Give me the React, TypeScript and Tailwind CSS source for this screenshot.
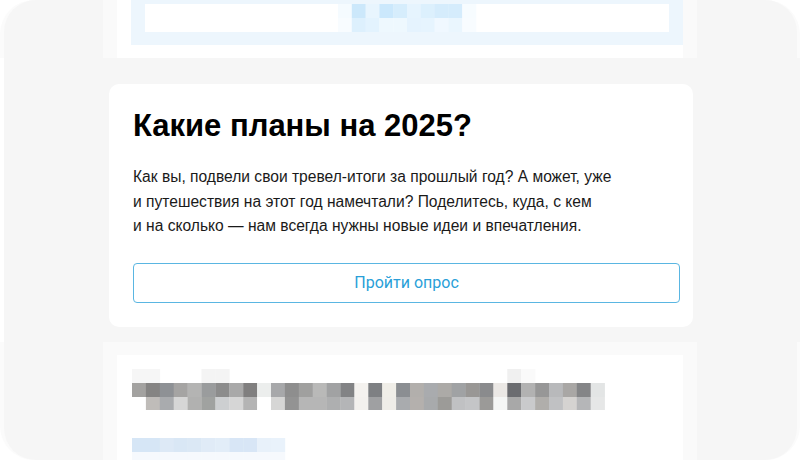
import React from "react";

const topRow1 = ["#f5fbff", "#cce8fb", "#e8f5fe", "#cbe8fc", "#d6edfc", "#e6f4fe", "#dcf0fd", "#d5ecfc", "#d5ecfc", "#f7fcff"];
const topRow2 = ["#f8fcff", "#ddf0fd", "#e3f3fe", "#eef8fe", "#eef8fe", "#e5f3fe", "#e6f4fe", "#f0f8ff", "#eaf6fe", "#f8fcff"];

const r1 = [
  "#a3a2a0", "#858483", "#8e9195", "#a5a4a3", "#b4b4b3", "#9a9c9d", "#8c8c8c", "#a9a9a9", "#807f7f", "#eceeed",
  "#a7a8aa", "#8e8e8e", "#a0a09f", "#b9b9b8", "#a1a2a3", "#828385", "#f4f2ef", "#7e8083", "#f0eee8", "#8b8e92",
  "#b2afac", "#a9abae", "#acaaa7", "#a0a2a4", "#999795", "#8a8b8d", "#ebe8e5", "#6b6c70", "#b2b2b2", "#979797",
  "#b8b9bb", "#a9a7a5", "#848587", "#e3e5e5",
];
const r2 = [
  "#ffffff", "#bfbcb9", "#a9abae", "#d6d6d6", "#b1b1b0", "#a0a2a0", "#cdcfd1", "#d6d6d6", "#b4b4b4", "#ffffff",
  "#d6d6d5", "#939393", "#b6b6b6", "#b6b6b6", "#aeafb0", "#b4b5b7", "#f3f1ee", "#9fa0a2", "#efede8", "#a9abae",
  "#b4b0ad", "#a8aaac", "#9c9b98", "#c0c1c3", "#c4c5c7", "#9b9a98", "#f5f6f5", "#a8a8a8", "#c9cacc", "#b0aeab",
  "#c0c1c3", "#d5d3d1", "#b5b6b8", "#e6e7e7",
];
const faintTop: Record<number, string> = { 0: "#f6f6f6", 1: "#f6f6f6", 5: "#f4f4f4", 6: "#f4f4f4", 27: "#f0f0f0", 28: "#fafafa" };
const blue = ["#d6e6f6", "#d6e6f6", "#dde9f6", "#d9e7f5", "#dbe8f5", "#e0ebf7", "#e2edf8", "#d8e6f6", "#d8e6f6", "#e8f1fa", "#e9f2fb"];

function TopMosaic() {
  const w = 13.8;
  return (
    <svg width="524" height="28" className="block">
      {topRow1.map((c, i) => (
        <rect key={"a" + i} x={193 + i * w} y={0} width={w + 0.3} height={14} fill={c} />
      ))}
      {topRow2.map((c, i) => (
        <rect key={"b" + i} x={193 + i * w} y={14} width={w + 0.3} height={14} fill={c} />
      ))}
    </svg>
  );
}

function BottomMosaic() {
  const w = 13.9;
  const x0 = 15;
  return (
    <svg width="566" height="105" className="block">
      {Object.entries(faintTop).map(([k, c]) => (
        <rect key={"f" + k} x={x0 + Number(k) * w} y={14} width={w + 0.3} height={14} fill={c} />
      ))}
      {r1.map((c, i) => (
        <rect key={"r1" + i} x={x0 + i * w} y={28} width={w + 0.3} height={14} fill={c} />
      ))}
      {r2.map((c, i) => (
        <rect key={"r2" + i} x={x0 + i * w} y={42} width={w + 0.3} height={13} fill={c} />
      ))}
      {blue.map((c, i) => (
        <rect key={"bl" + i} x={x0 + i * w} y={83} width={w + 0.3} height={14} fill={c} />
      ))}
      {blue.map((_, i) => (
        <rect key={"bf" + i} x={x0 + i * w} y={97} width={w + 0.3} height={8} fill="#f6f9fd" />
      ))}
    </svg>
  );
}

export default function App() {
  return (
    <div className="w-[800px] h-[460px] bg-white overflow-hidden flex flex-col font-['Liberation_Sans',Arial,sans-serif]">
      {/* top section */}
      <div className="flex h-[58px] shrink-0">
        <div className="w-[103px] pl-[4px] bg-[#fbfbfb] rounded-tl-[34px]">
          <div className="h-full bg-[#f6f6f6] rounded-tl-[32px]" />
        </div>
        <div className="w-[14px] bg-[#fafafa]" />
        <div className="w-[566px] bg-white pl-[14px]">
          <div className="h-[45px] bg-[#edf6fd] pt-[4px] px-[14px]">
            <div className="h-[28px] bg-white">
              <TopMosaic />
            </div>
          </div>
        </div>
        <div className="w-[14px] bg-[#fafafa]" />
        <div className="w-[103px] pr-[3px] bg-[#fbfbfb] rounded-tr-[34px]">
          <div className="h-full bg-[#f6f6f6] rounded-tr-[32px]" />
        </div>
      </div>

      {/* middle section */}
      <div className="h-[284px] shrink-0 ml-[4px] bg-[#f6f6f6] pt-[26px] pl-[105px]">
        <div className="w-[584px] h-[243px] bg-white rounded-[10px] pt-6 pb-6 pl-6 pr-[13px] flex flex-col">
          <h1 className="text-[31px] leading-[36px] font-bold text-black">Какие планы на 2025?</h1>
          <p className="mt-[21px] text-[15.6px] leading-[24.5px] text-[#1a1a1a]">
            Как вы, подвели свои тревел-итоги за прошлый год? А может, уже
            <br />
            и путешествия на этот год намечтали? Поделитесь, куда, с кем
            <br />
            и на сколько — нам всегда нужны новые идеи и впечатления.
          </p>
          <div className="mt-[24px] h-[41px] border border-[#5ab6e2] rounded-[4px] flex items-center justify-center text-[16px] text-[#2a9fd8] font-['Roboto',Arial,sans-serif]">
            Пройти опрос
          </div>
        </div>
      </div>

      {/* bottom section */}
      <div className="flex flex-1">
        <div className="w-[103px] pl-[4px] bg-[#fbfbfb] rounded-bl-[34px]">
          <div className="h-full bg-[#f6f6f6] rounded-bl-[32px]" />
        </div>
        <div className="w-[594px] bg-[#fafafa] pt-[13px] px-[14px]">
          <div className="h-full bg-white">
            <BottomMosaic />
          </div>
        </div>
        <div className="w-[103px] pr-[3px] bg-[#fbfbfb] rounded-br-[34px]">
          <div className="h-full bg-[#f6f6f6] rounded-br-[32px]" />
        </div>
      </div>
    </div>
  );
}
